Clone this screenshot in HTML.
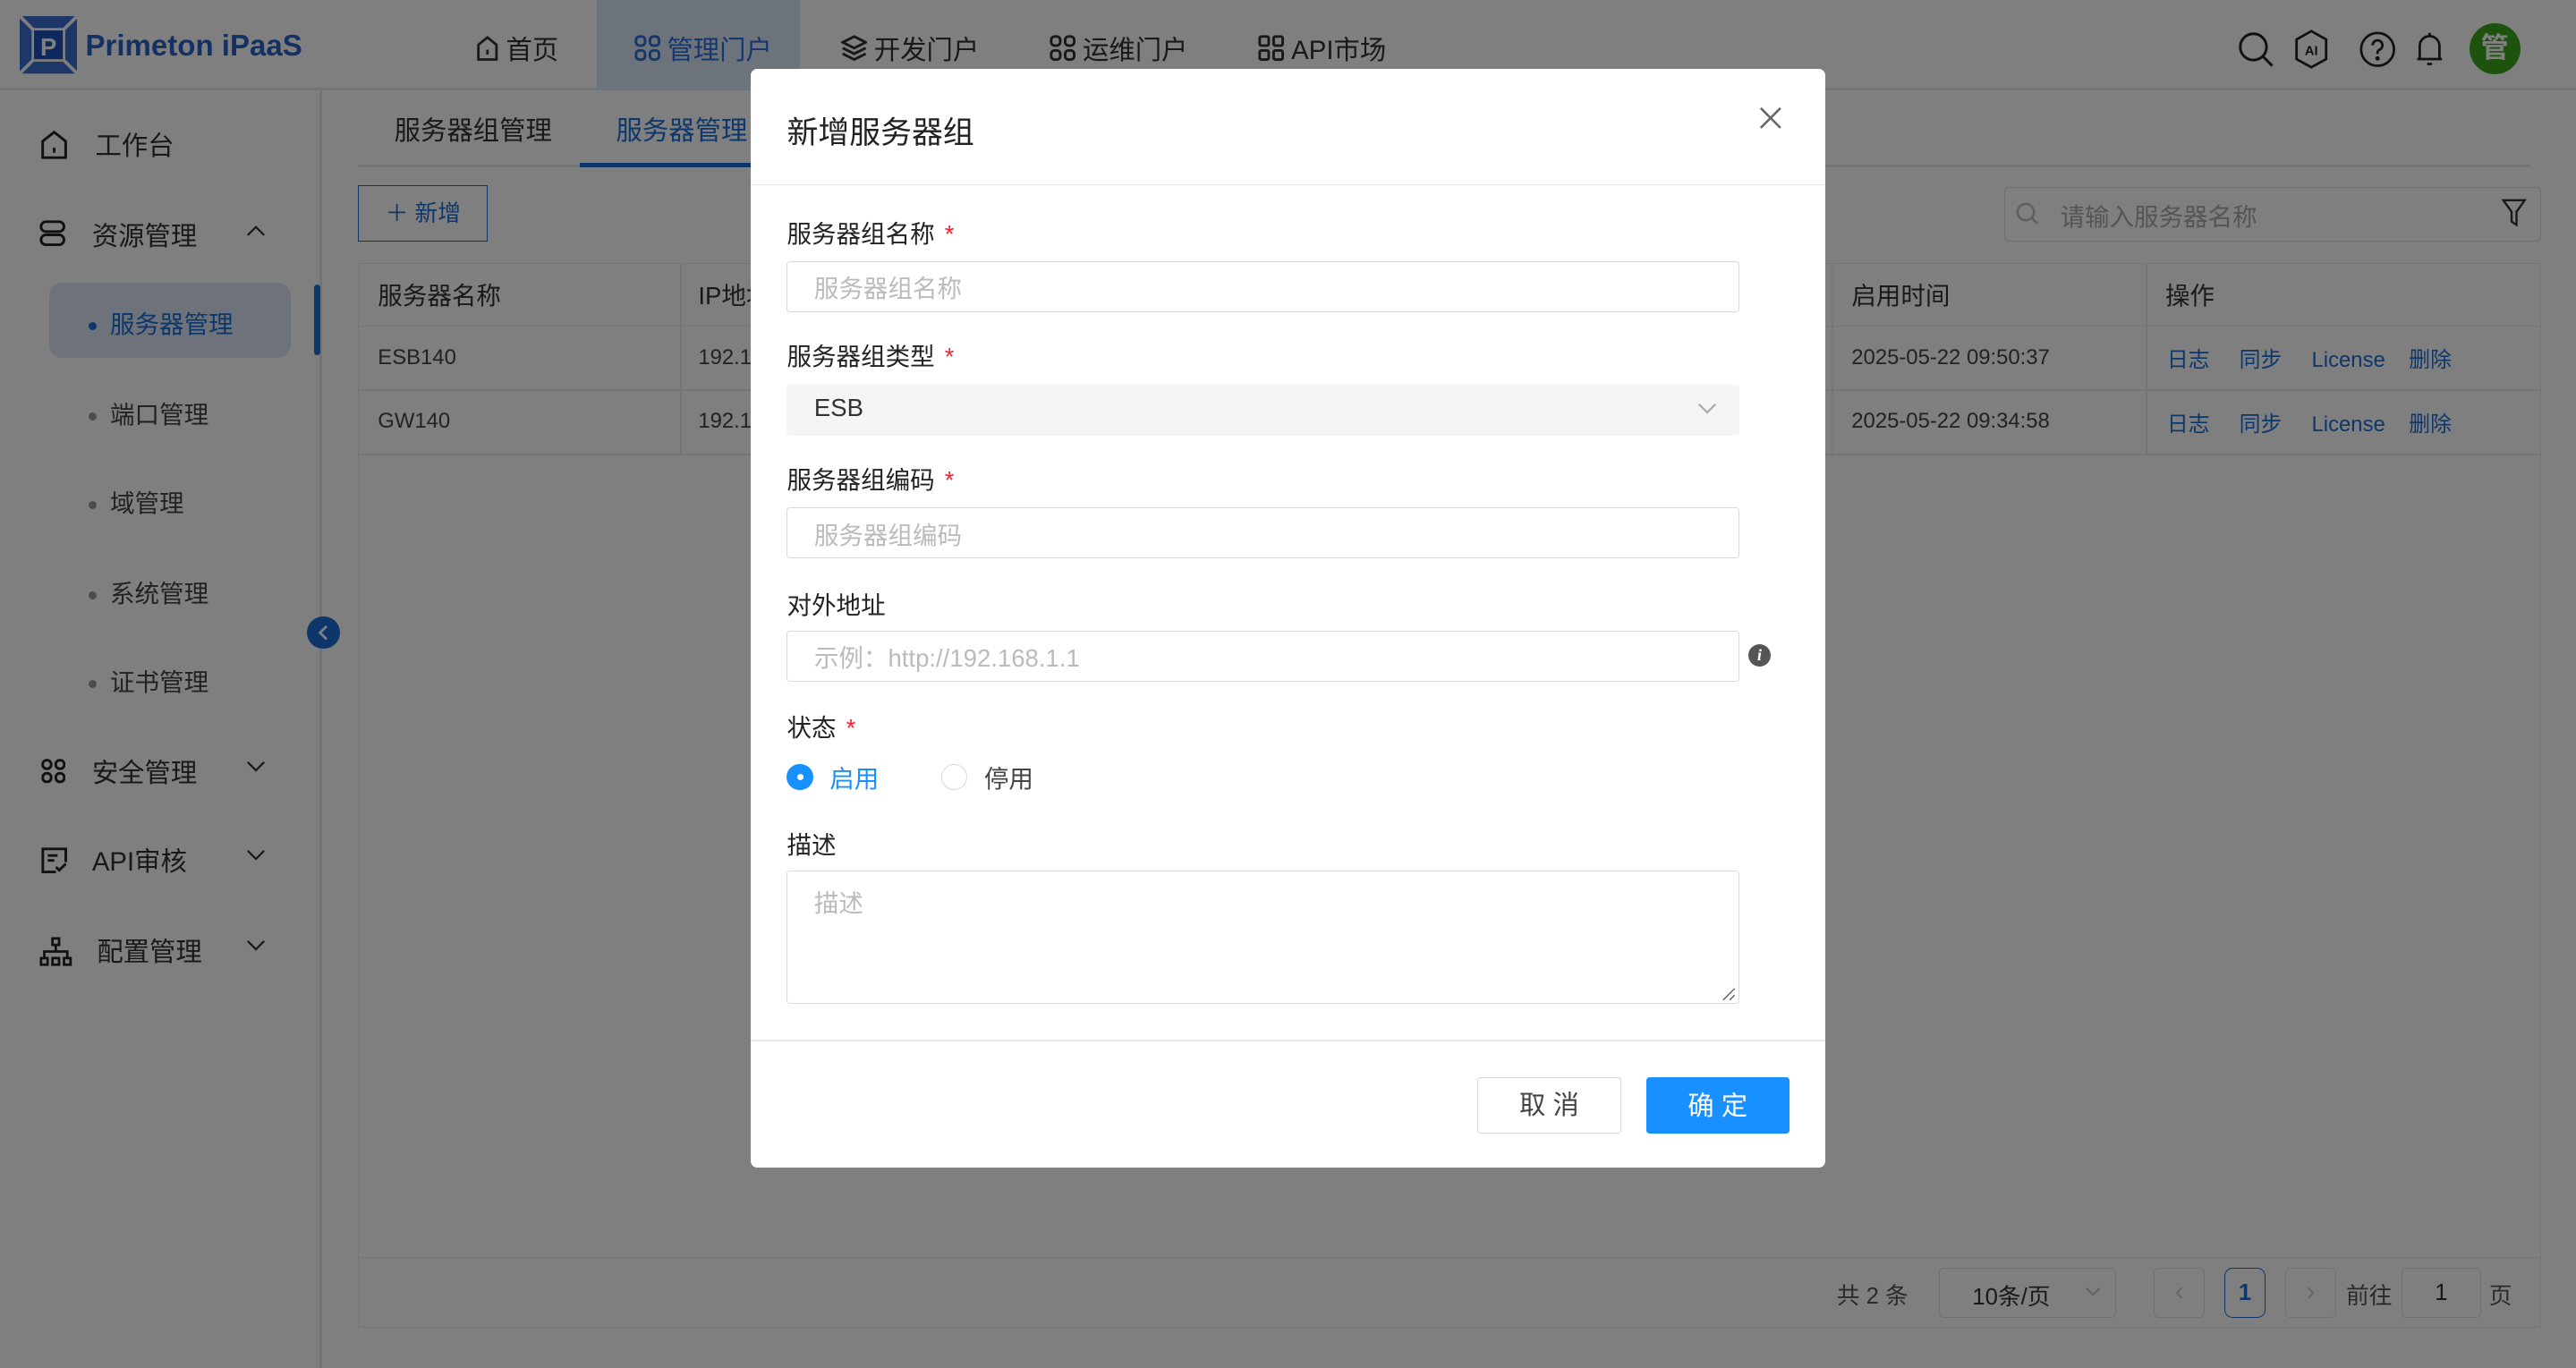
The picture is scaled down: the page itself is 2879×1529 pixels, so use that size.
<!DOCTYPE html>
<html><head><meta charset="utf-8"><style>
*{box-sizing:border-box;margin:0;padding:0}
html,body{width:2879px;height:1529px;overflow:hidden;background:#fff}
#root{position:absolute;left:0;top:0;width:1568px;height:833px;zoom:1.83610;font-family:"Liberation Sans","Noto Sans CJK SC",sans-serif;color:#333;background:#fff}
.a{position:absolute;white-space:nowrap}
.hdr{left:0;top:0;width:1568px;height:55px;border-bottom:2px solid #e4e6ea;background:#fff}
.nav{top:18px;font-size:16px;color:#333;display:flex;align-items:center;gap:4px}
.side{left:0;top:55px;width:196px;height:778px;border-right:2px solid #e6e6e6}
.si{font-size:16px;color:#333}
.sub{font-size:15px;color:#444}
.dot{display:inline-block;width:5px;height:5px;border-radius:50%;background:#999;vertical-align:middle;margin-right:8px}
.th{font-size:15px;color:#333}
.td{font-size:13px;color:#444}
.lk{font-size:13px;color:#1a6fd6}
.ov{left:0;top:0;width:1568px;height:833px;background:rgba(0,0,0,.5)}
.modal{left:457px;top:42px;width:654px;height:669px;background:#fff;border-radius:4px}
.lbl{font-size:15px;color:#222}
.req{color:#f5222d;margin-left:6px}
.inp{border:1px solid #d9d9d9;border-radius:2px;height:31px;width:580px;font-size:15px;color:#bbb;padding:4px 16px;background:#fff}
</style></head><body><div id="root">
<div class="a hdr"></div>
<svg class="a" style="left:12px;top:10px" width="35" height="35" viewBox="0 0 35 35"><rect x="0" y="0" width="35" height="35" fill="#3b6fd0"/><path d="M0 0L8 8M35 0L27 8M0 35L8 27M35 35L27 27" stroke="#fff" stroke-width="2"/><rect x="8" y="8" width="19" height="19" fill="#1d4fb8" stroke="#fff" stroke-width="1.5"/><text x="17.5" y="24" font-size="15" font-weight="bold" fill="#fff" text-anchor="middle" font-family="Liberation Sans">P</text></svg>
<div class="a" style="left:52px;top:18px;font-size:18px;font-weight:bold;color:#2a62c9">Primeton iPaaS</div>
<div class="a" style="left:363px;top:0;width:124px;height:55px;background:#dbe6f7"></div>
<div class="a nav" style="left:289px"><svg width="15" height="16" viewBox="0 0 15 16"><path d="M2 6L7.5 1.5 13 6V15H2Z" fill="none" stroke="#333" stroke-width="1.5"/><path d="M7.5 9v3" stroke="#333" stroke-width="1.5"/></svg>首页</div>
<div class="a nav" style="left:386px;color:#2a6fdb"><svg width="16" height="16" viewBox="0 0 16 16" fill="none" stroke="#2a6fdb" stroke-width="1.6"><rect x="1" y="1" width="5.5" height="5.5" rx="2"/><rect x="9.5" y="1" width="5.5" height="5.5" rx="2"/><rect x="1" y="9.5" width="5.5" height="5.5" rx="2"/><rect x="9.5" y="9.5" width="5.5" height="5.5" rx="2"/></svg>管理门户</div>
<div class="a nav" style="left:512px"><svg width="16" height="16" viewBox="0 0 16 16" fill="none" stroke="#333" stroke-width="1.6"><path d="M8 1L15 4.5 8 8 1 4.5Z"/><path d="M1 8l7 3.5 7-3.5M1 11.5L8 15l7-3.5"/></svg>开发门户</div>
<div class="a nav" style="left:639px"><svg width="16" height="16" viewBox="0 0 16 16" fill="none" stroke="#333" stroke-width="1.6"><rect x="1" y="1" width="5.5" height="5.5" rx="2"/><rect x="9.5" y="1" width="5.5" height="5.5" rx="2"/><rect x="1" y="9.5" width="5.5" height="5.5" rx="2"/><rect x="9.5" y="9.5" width="5.5" height="5.5" rx="2"/></svg>运维门户</div>
<div class="a nav" style="left:766px"><svg width="16" height="16" viewBox="0 0 16 16" fill="none" stroke="#333" stroke-width="1.6"><rect x="1" y="1" width="5.5" height="5.5" rx="1"/><rect x="9.5" y="1" width="5.5" height="5.5" rx="1"/><rect x="1" y="9.5" width="5.5" height="5.5" rx="1"/><rect x="9.5" y="9.5" width="5.5" height="5.5" rx="1"/></svg>API市场</div>
<svg class="a" style="left:1362px;top:19px" width="22" height="22" viewBox="0 0 22 22" fill="none" stroke="#222" stroke-width="1.6"><circle cx="9.5" cy="9.5" r="8"/><path d="M15.5 15.5L21 21"/></svg>
<svg class="a" style="left:1396px;top:18px" width="22" height="24" viewBox="0 0 22 24" fill="none" stroke="#222" stroke-width="1.5"><path d="M11 1L20 6V18L11 23 2 18V6Z"/><text x="11" y="15.5" font-size="8" fill="#222" stroke="none" text-anchor="middle" font-weight="bold" font-family="Liberation Sans">AI</text></svg>
<svg class="a" style="left:1436px;top:19px" width="22" height="22" viewBox="0 0 22 22" fill="none" stroke="#222" stroke-width="1.5"><circle cx="11" cy="11" r="10"/><path d="M8 8.5a3 3 0 1 1 4 2.8c-1 .5-1 1.2-1 2.5"/><circle cx="11" cy="16.5" r=".6" fill="#222"/></svg>
<svg class="a" style="left:1469px;top:18px" width="20" height="24" viewBox="0 0 20 24" fill="none" stroke="#222" stroke-width="1.5"><path d="M4 18V10a6 6 0 0 1 12 0v8H2.5h15"/><path d="M8.5 21h3M10 2v2"/></svg>
<div class="a" style="left:1503px;top:14px;width:31px;height:31px;border-radius:50%;background:#3aa61f;color:#fff;font-size:17px;font-weight:bold;text-align:center;line-height:31px">管</div>
<div class="a side"></div>
<svg class="a" style="left:24px;top:79px" width="18" height="18" viewBox="0 0 18 18" fill="none" stroke="#222" stroke-width="1.6"><path d="M2 7L9 1.5 16 7V17H2Z"/><path d="M9 11v3"/></svg>
<div class="a si" style="left:58px;top:76px">工作台</div>
<svg class="a" style="left:24px;top:134px" width="16" height="16" viewBox="0 0 16 16" fill="none" stroke="#222" stroke-width="1.6"><rect x="1" y="1" width="14" height="6" rx="3"/><rect x="1" y="9" width="14" height="6" rx="3"/></svg>
<div class="a si" style="left:56px;top:131px">资源管理</div>
<svg class="a" style="left:150px;top:136px" width="12" height="8" viewBox="0 0 12 8" fill="none" stroke="#333" stroke-width="1.2"><path d="M1 7l5-5 5 5"/></svg>
<div class="a" style="left:30px;top:172px;width:147px;height:46px;background:#dce6f6;border-radius:8px"></div>
<div class="a" style="left:191px;top:173px;width:4px;height:43px;background:#1a6fd6;border-radius:2px"></div>
<div class="a sub" style="left:54px;top:185px;color:#1a6fd6"><span class="dot" style="background:#1a6fd6"></span>服务器管理</div>
<div class="a sub" style="left:54px;top:240px"><span class="dot"></span>端口管理</div>
<div class="a sub" style="left:54px;top:294px"><span class="dot"></span>域管理</div>
<div class="a sub" style="left:54px;top:349px"><span class="dot"></span>系统管理</div>
<div class="a sub" style="left:54px;top:403px"><span class="dot"></span>证书管理</div>
<svg class="a" style="left:25px;top:462px" width="15" height="15" viewBox="0 0 16 16" fill="none" stroke="#222" stroke-width="1.7"><rect x="1" y="1" width="5.5" height="5.5" rx="2.5"/><rect x="9.5" y="1" width="5.5" height="5.5" rx="2.5"/><rect x="1" y="9.5" width="5.5" height="5.5" rx="2.5"/><rect x="9.5" y="9.5" width="5.5" height="5.5" rx="2.5"/></svg>
<div class="a si" style="left:56px;top:458px">安全管理</div>
<svg class="a" style="left:25px;top:516px" width="16" height="16" viewBox="0 0 16 16" fill="none" stroke="#222" stroke-width="1.6"><path d="M9 15H1V1h14v8"/><path d="M4 5h6M4 8h4M9 12l2 2 4-4"/></svg>
<div class="a si" style="left:56px;top:512px">API审核</div>
<svg class="a" style="left:24px;top:570px" width="20" height="18" viewBox="0 0 20 18" fill="none" stroke="#222" stroke-width="1.5"><rect x="8" y="1" width="4" height="4"/><rect x="1" y="13" width="4" height="4"/><rect x="8" y="13" width="4" height="4"/><rect x="15" y="13" width="4" height="4"/><path d="M10 5v4M3 13V9h14v4"/></svg>
<div class="a si" style="left:59px;top:567px">配置管理</div>
<svg class="a" style="left:150px;top:463px" width="12" height="8" viewBox="0 0 12 8" fill="none" stroke="#333" stroke-width="1.2"><path d="M1 1l5 5 5-5"/></svg>
<svg class="a" style="left:150px;top:517px" width="12" height="8" viewBox="0 0 12 8" fill="none" stroke="#333" stroke-width="1.2"><path d="M1 1l5 5 5-5"/></svg>
<svg class="a" style="left:150px;top:572px" width="12" height="8" viewBox="0 0 12 8" fill="none" stroke="#333" stroke-width="1.2"><path d="M1 1l5 5 5-5"/></svg>
<div class="a" style="left:187px;top:375px;width:20px;height:20px;border-radius:50%;background:#1a6fd6"></div>
<svg class="a" style="left:193px;top:380px" width="8" height="10" viewBox="0 0 8 10" fill="none" stroke="#fff" stroke-width="1.5"><path d="M6 1L2 5l4 4"/></svg>
<div class="a" style="left:218px;top:100px;width:1322px;height:2px;background:#e4e6ea"></div>
<div class="a" style="left:353px;top:99px;width:107px;height:3px;background:#1a6fd6"></div>
<div class="a" style="left:240px;top:67px;font-size:16px;color:#333">服务器组管理</div>
<div class="a" style="left:375px;top:67px;font-size:16px;color:#1a6fd6">服务器管理</div>
<div class="a" style="left:218px;top:113px;width:79px;height:34px;border:1px solid #1a6fd6;color:#1a6fd6;font-size:14px;text-align:center;line-height:34px">＋ 新增</div>
<div class="a" style="left:1220px;top:114px;width:327px;height:33px;border:1px solid #dcdfe6;border-radius:3px"></div>
<svg class="a" style="left:1227px;top:123px" width="14" height="14" viewBox="0 0 14 14" fill="none" stroke="#bbb" stroke-width="1.3"><circle cx="6" cy="6" r="5"/><path d="M9.5 9.5L13 13"/></svg>
<div class="a" style="left:1254px;top:120px;font-size:15px;color:#aaa">请输入服务器名称</div>
<svg class="a" style="left:1523px;top:121px" width="15" height="17" viewBox="0 0 15 17" fill="none" stroke="#333" stroke-width="1.3"><path d="M1 1h13L9 8v8L6 14V8Z"/></svg>
<div class="a" style="left:218px;top:160px;width:1329px;height:648px;border:1px solid #e8eaee"></div>
<div class="a" style="left:218px;top:198px;width:1329px;height:1px;background:#e8eaee"></div>
<div class="a" style="left:218px;top:237px;width:1329px;height:1px;background:#e8eaee"></div>
<div class="a" style="left:218px;top:276px;width:1329px;height:1px;background:#e8eaee"></div>
<div class="a" style="left:218px;top:765px;width:1329px;height:1px;background:#e8eaee"></div>
<div class="a" style="left:414px;top:160px;width:1px;height:117px;background:#e8eaee"></div>
<div class="a" style="left:1115px;top:160px;width:1px;height:117px;background:#e8eaee"></div>
<div class="a" style="left:1306px;top:160px;width:1px;height:117px;background:#e8eaee"></div>
<div class="a th" style="left:230px;top:168px">服务器名称</div>
<div class="a th" style="left:425px;top:168px">IP地址</div>
<div class="a th" style="left:1127px;top:168px">启用时间</div>
<div class="a th" style="left:1318px;top:168px">操作</div>
<div class="a td" style="left:230px;top:210px">ESB140</div>
<div class="a td" style="left:425px;top:210px">192.168.1.140</div>
<div class="a td" style="left:1127px;top:210px">2025-05-22 09:50:37</div>
<div class="a td" style="left:230px;top:249px">GW140</div>
<div class="a td" style="left:425px;top:249px">192.168.1.140</div>
<div class="a td" style="left:1127px;top:249px">2025-05-22 09:34:58</div>
<div class="a lk" style="left:1319px;top:208px">日志 &nbsp;&nbsp;&nbsp;&nbsp;同步 &nbsp;&nbsp;&nbsp;&nbsp;License &nbsp;&nbsp;&nbsp;删除</div>
<div class="a lk" style="left:1319px;top:247px">日志 &nbsp;&nbsp;&nbsp;&nbsp;同步 &nbsp;&nbsp;&nbsp;&nbsp;License &nbsp;&nbsp;&nbsp;删除</div>
<div class="a" style="left:1118px;top:778px;font-size:14px;color:#555">共 2 条</div>
<div class="a" style="left:1180px;top:772px;width:108px;height:30px;border:1px solid #dcdfe6;border-radius:3px;font-size:14px;padding:6px 0 0 20px">10条/页</div>
<svg class="a" style="left:1269px;top:783px" width="10" height="7" viewBox="0 0 10 7" fill="none" stroke="#bbb" stroke-width="1"><path d="M1 1l4 4 4-4"/></svg>
<div class="a" style="left:1311px;top:772px;width:31px;height:30px;border:1px solid #e4e4e4;border-radius:3px;color:#ccc;text-align:center;line-height:28px">‹</div>
<div class="a" style="left:1354px;top:772px;width:25px;height:30px;border:1px solid #1a6fd6;border-radius:5px;color:#1a6fd6;font-weight:bold;font-size:14px;text-align:center;line-height:30px">1</div>
<div class="a" style="left:1391px;top:772px;width:31px;height:30px;border:1px solid #e4e4e4;border-radius:3px;color:#ccc;text-align:center;line-height:28px">›</div>
<div class="a" style="left:1428px;top:778px;font-size:14px;color:#555">前往</div>
<div class="a" style="left:1462px;top:772px;width:48px;height:30px;border:1px solid #dcdfe6;border-radius:3px;font-size:14px;text-align:center;line-height:30px">1</div>
<div class="a" style="left:1515px;top:778px;font-size:14px;color:#555">页</div>
<div class="a ov"></div>
<div class="a modal"></div>
<div class="a" style="left:479px;top:66px;font-size:19px;color:#222">新增服务器组</div>
<svg class="a" style="left:1071px;top:65px" width="14" height="14" viewBox="0 0 14 14" stroke="#666" stroke-width="1.4"><path d="M1 1l12 12M13 1L1 13"/></svg>
<div class="a" style="left:457px;top:112px;width:654px;height:1px;background:#e8e8e8"></div>
<div class="a lbl" style="left:479px;top:130px">服务器组名称<span class="req">*</span></div>
<div class="a inp" style="left:479px;top:159px">服务器组名称</div>
<div class="a lbl" style="left:479px;top:205px">服务器组类型<span class="req">*</span></div>
<div class="a inp" style="left:479px;top:234px;background:#f5f5f5;border-color:#f5f5f5;color:#333;padding-top:5px">ESB</div>
<svg class="a" style="left:1033px;top:245px" width="12" height="8" viewBox="0 0 12 8" fill="none" stroke="#aaa" stroke-width="1.2"><path d="M1 1l5 5 5-5"/></svg>
<div class="a lbl" style="left:479px;top:280px">服务器组编码<span class="req">*</span></div>
<div class="a inp" style="left:479px;top:309px">服务器组编码</div>
<div class="a lbl" style="left:479px;top:356px">对外地址</div>
<div class="a inp" style="left:479px;top:384px">示例：http://192.168.1.1</div>
<div class="a" style="left:1064px;top:392px;width:14px;height:14px;border-radius:50%;background:#555;color:#fff;font-size:10px;font-style:italic;font-weight:bold;text-align:center;line-height:14px;font-family:'Liberation Serif',serif">i</div>
<div class="a lbl" style="left:479px;top:431px">状态<span class="req">*</span></div>
<div class="a" style="left:479px;top:465px;width:16px;height:16px;border-radius:50%;background:#1890ff"></div>
<div class="a" style="left:485px;top:471px;width:4px;height:4px;border-radius:50%;background:#fff"></div>
<div class="a" style="left:505px;top:462px;font-size:15px;color:#1890ff">启用</div>
<div class="a" style="left:573px;top:465px;width:16px;height:16px;border-radius:50%;border:1px solid #d9d9d9"></div>
<div class="a" style="left:599px;top:462px;font-size:15px;color:#444">停用</div>
<div class="a lbl" style="left:479px;top:502px">描述</div>
<div class="a inp" style="left:479px;top:530px;height:81px;padding-top:7px">描述</div>
<svg class="a" style="left:1048px;top:601px" width="9" height="9" viewBox="0 0 9 9" stroke="#666" stroke-width="0.8"><path d="M1 8L8 1M5 8L8 5"/></svg>
<div class="a" style="left:457px;top:633px;width:654px;height:1px;background:#e8e8e8"></div>
<div class="a" style="left:899px;top:656px;width:88px;height:34px;border:1px solid #d9d9d9;border-radius:2px;font-size:16px;color:#444;text-align:center;line-height:34px">取 消</div>
<div class="a" style="left:1002px;top:656px;width:87px;height:34px;background:#1890ff;border-radius:2px;font-size:16px;color:#fff;text-align:center;line-height:36px">确 定</div>
</div></body></html>
